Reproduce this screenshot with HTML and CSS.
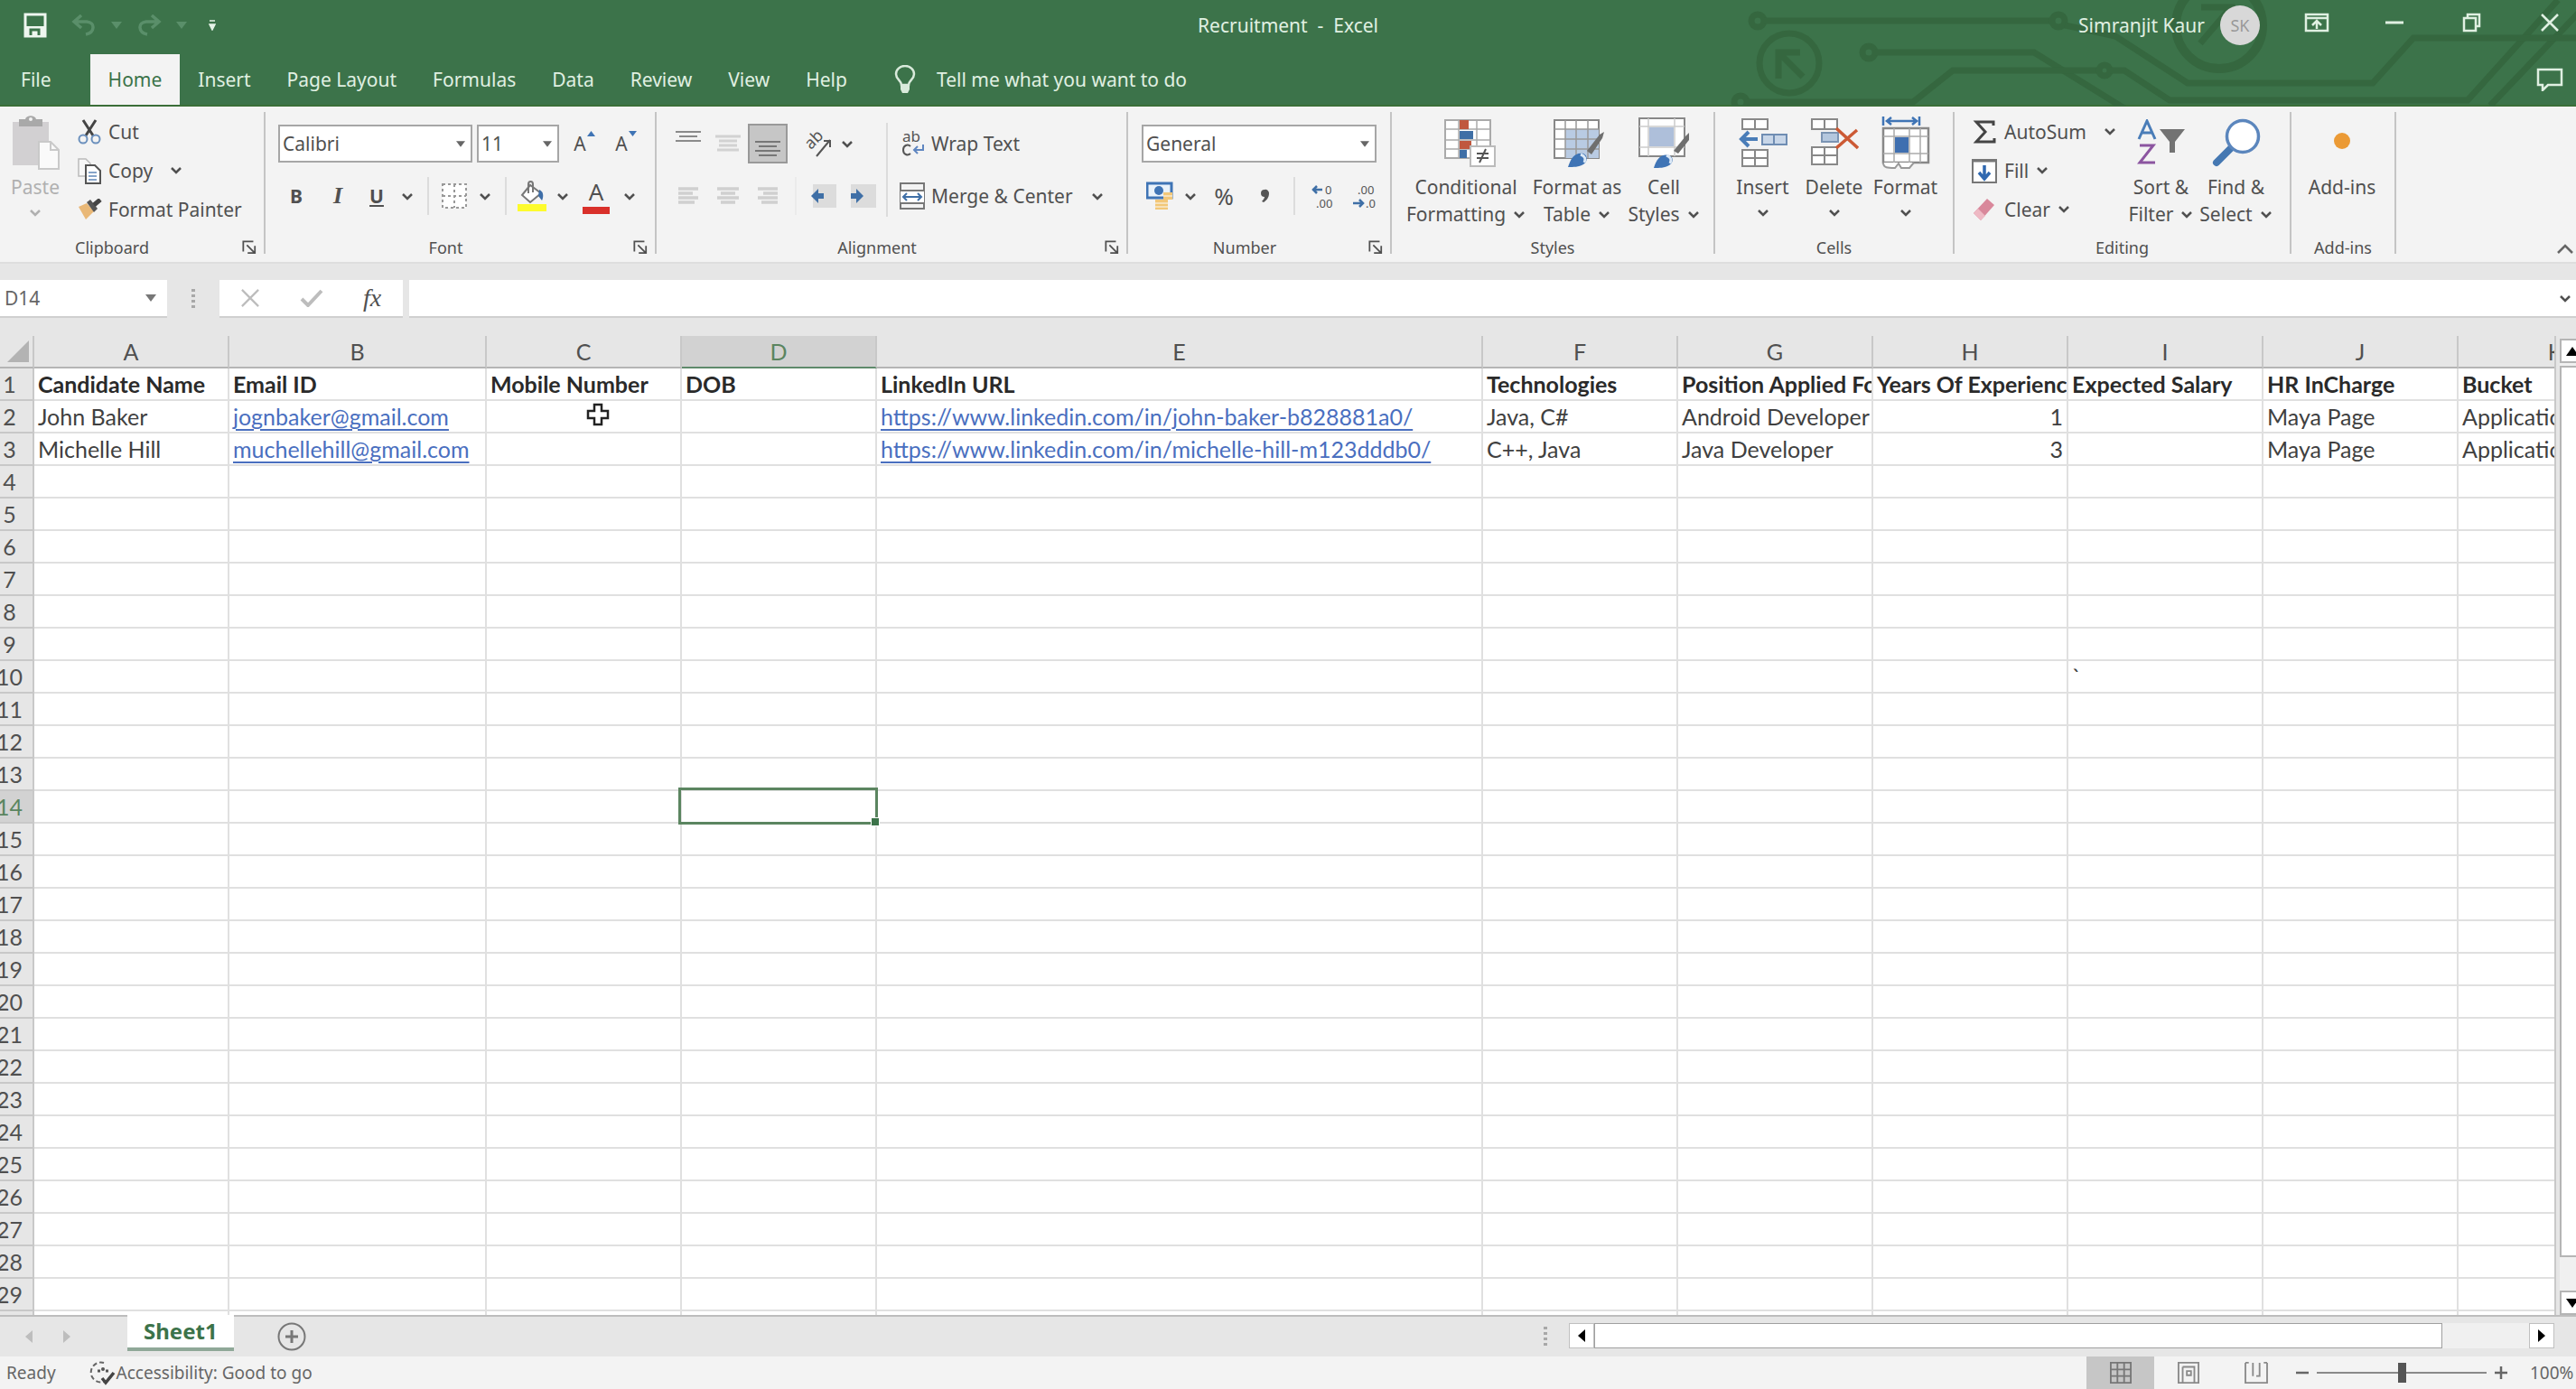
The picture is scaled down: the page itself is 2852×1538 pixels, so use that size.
FILE: index.html
```html
<!DOCTYPE html>
<html lang="en">

<head>
  <meta charset="UTF-8">
  <meta name="viewport" content="width=device-width, initial-scale=1.0">
  <title>Recruitment - Excel</title>
  <link rel="stylesheet" href="styles.css">
</head>

<body>
  <!-- shared icons -->
  <svg class="defs" width="0" height="0" aria-hidden="true">
    <symbol id="chev" viewBox="0 0 14 9"><path d="M2 2l5 5 5-5" fill="none" stroke="currentColor" stroke-width="2.500"/></symbol>
    <symbol id="tri" viewBox="0 0 12 8"><path d="M0 0h12L6 8z" fill="currentColor"/></symbol>
    <symbol id="launch" viewBox="0 0 18 18"><path d="M1.500 14V1.500H14M6 6l9 9M16 7v9H7" fill="none" stroke="currentColor" stroke-width="2"/></symbol>
  </svg>

  <header class="app-header">
    <svg class="circuit" viewBox="0 0 1000 117" width="1000" height="117" aria-hidden="true">
      <g fill="none" stroke="#35673f" stroke-width="7">
        <circle cx="94" cy="23" r="7"/><path d="M101 23h319"/><circle cx="427" cy="23" r="7"/>
        <circle cx="129" cy="70" r="33"/><path d="M117 87V58h24M118 59l26 26"/>
        <circle cx="217" cy="58" r="7"/><path d="M224 58h176l100 62"/>
        <circle cx="75" cy="113" r="7"/><path d="M82 113h184l44-35h162"/><circle cx="478" cy="78" r="6"/>
        <path d="M484 78h16l50 33h330L980 0M905 117l100-105"/>
        <path d="M434 28l56 12 80 52h205l45-50h185"/>
        <circle cx="605" cy="28" r="48" stroke-width="10"/><path d="M585 8h34v30M618 8l-34 40"/>
      </g>
    </svg>

    <div class="title-bar">
      <div class="quick-access">
        <button class="qa save" aria-label="Save"><svg width="26" height="28" viewBox="0 0 26 28"><path d="M2 2h22v24H2z" fill="none" stroke="#eef6ef" stroke-width="3"/><path d="M3 15h20v11H3z" fill="#eef6ef"/><path d="M8 25v-6h9v6" fill="none" stroke="#3c734a" stroke-width="3"/></svg></button>
        <button class="qa" aria-label="Undo" disabled><svg width="28" height="24" viewBox="0 0 28 24"><path d="M11 1L3 8l8 7M3 8h14c10 1 9 12-1 14" fill="none" stroke="currentColor" stroke-width="3.500"/></svg></button>
        <button class="qa small" aria-label="Undo list" disabled><svg width="12" height="8"><use href="#tri"/></svg></button>
        <button class="qa" aria-label="Redo" disabled><svg width="28" height="24" viewBox="0 0 28 24"><path d="M17 1l8 7-8 7M25 8H11C1 9 2 20 12 22" fill="none" stroke="currentColor" stroke-width="3.500"/></svg></button>
        <button class="qa small" aria-label="Redo list" disabled><svg width="12" height="8"><use href="#tri"/></svg></button>
        <button class="qa more" aria-label="Customize Quick Access Toolbar"><svg width="8" height="12" viewBox="0 0 8 12"><path d="M1 1h6M1 5h6L4 11z" fill="#e6f3e8" stroke="#e6f3e8" stroke-width="1.500"/></svg></button>
      </div>
      <div class="doc-title">Recruitment&nbsp; - &nbsp;Excel</div>
      <div class="window-tools">
        <span class="user">Simranjit Kaur</span>
        <span class="avatar">SK</span>
        <button class="win ribbon-opt" aria-label="Ribbon Display Options"><svg width="28" height="22" viewBox="0 0 28 22"><path d="M2 2h24v18H2zM2 6h24M14 18v-8M9 14l5-5 5 5" fill="none" stroke="currentColor" stroke-width="2.500"/></svg></button>
        <button class="win" aria-label="Minimize"><svg width="20" height="22" viewBox="0 0 20 22"><path d="M0 11h20" stroke="currentColor" stroke-width="3"/></svg></button>
        <button class="win" aria-label="Restore Down"><svg width="22" height="22" viewBox="0 0 22 22"><path d="M2 6h13v14H2zM6 6V2h13v13h-4" fill="none" stroke="currentColor" stroke-width="2.500"/></svg></button>
        <button class="win" aria-label="Close"><svg width="20" height="20" viewBox="0 0 20 20"><path d="M1 1l18 18M19 1L1 19" stroke="currentColor" stroke-width="2.500"/></svg></button>
      </div>
    </div>

    <nav class="tabs">
      <button class="tab file">File</button>
      <button class="tab active">Home</button>
      <button class="tab">Insert</button>
      <button class="tab">Page Layout</button>
      <button class="tab">Formulas</button>
      <button class="tab">Data</button>
      <button class="tab">Review</button>
      <button class="tab">View</button>
      <button class="tab">Help</button>
      <button class="tab tell-me">
        <svg width="24" height="32" viewBox="0 0 24 32"><path d="M8 22c0-5-6-6-6-12a10 9 0 0 1 20 0c0 6-6 7-6 12z" fill="none" stroke="#d9eadb" stroke-width="2.500"/><path d="M7 22h10v5l-2 4H9l-2-4z" fill="#d9eadb"/></svg>
        Tell me what you want to do
      </button>
      <button class="tab comments" aria-label="Comments"><svg width="30" height="26" viewBox="0 0 30 26"><path d="M2 2h26v17H13l-6 6v-6H2z" fill="none" stroke="currentColor" stroke-width="2.500"/></svg></button>
    </nav>
  </header>

  <section class="ribbon">
    <div class="group clipboard">
      <div class="group-body">
        <button class="big paste" disabled>
          <span class="big-icon"><svg width="54" height="60" viewBox="0 0 54 60"><path d="M2 7h40v48H2z" fill="#d2d0d2"/><path d="M9 4h7c1-5 11-5 12 0h7v8H9z" fill="#a9a9a9"/><circle cx="22" cy="4" r="2" fill="#f3f3f3"/><path d="M31 29h13l9 9v21H31z" fill="#fafafa" stroke="#c9c9c9" stroke-width="2"/><path d="M44 29v9h9" fill="none" stroke="#c9c9c9" stroke-width="2"/></svg></span>
          Paste
          <svg class="drop" width="14" height="9"><use href="#chev"/></svg>
        </button>
        <div class="list">
          <button class="item"><svg class="item-icon" width="28" height="28" viewBox="0 0 28 28"><path d="M7 1l11 17M21 1L10 18" stroke="#444" stroke-width="3"/><circle cx="7" cy="22" r="4.500" fill="none" stroke="#6b90bd" stroke-width="2"/><circle cx="21" cy="22" r="4.500" fill="none" stroke="#6b90bd" stroke-width="2"/></svg>Cut</button>
          <button class="item"><svg class="item-icon" width="28" height="30" viewBox="0 0 28 30"><path d="M2 2h8l5 5v14H2z" fill="#f8f8f8" stroke="#bbb" stroke-width="1.500"/><path d="M10 9h10l6 6v14H10z" fill="#fff" stroke="#555" stroke-width="2"/><path d="M13 17h9M13 21h9M13 25h9" stroke="#5f86b8" stroke-width="1.500"/></svg>Copy<svg class="drop" width="14" height="9"><use href="#chev"/></svg></button>
          <button class="item"><svg class="item-icon" width="28" height="24" viewBox="0 0 28 24"><path d="M2 9l9-4 8 9-9 9z" fill="#e9b877"/><path d="M11 4l4-3 8 10-4 4z" fill="#555"/><path d="M19 7l7-6" stroke="#444" stroke-width="5"/></svg>Format Painter</button>
        </div>
      </div>
      <div class="group-label"><span>Clipboard</span><button class="launcher" aria-label="Clipboard settings"><svg width="16" height="16"><use href="#launch"/></svg></button></div>
    </div>

    <div class="group font">
      <div class="group-body rows">
        <div class="row">
          <label class="combo font-name"><select aria-label="Font"><option>Calibri</option></select><svg width="10" height="7"><use href="#tri"/></svg></label>
          <label class="combo font-size"><select aria-label="Font size"><option>11</option></select><svg width="10" height="7"><use href="#tri"/></svg></label>
          <button class="tool wide grow" aria-label="Increase Font Size">A<svg width="9" height="6" viewBox="0 0 9 6"><path d="M0 6l4.500-6L9 6z" fill="#3f74b5"/></svg></button>
          <button class="tool wide grow" aria-label="Decrease Font Size">A<svg width="9" height="6" viewBox="0 0 9 6"><path d="M0 0h9L4.500 6z" fill="#3f74b5"/></svg></button>
        </div>
        <div class="row">
          <button class="tool wide bold">B</button>
          <button class="tool wide italic">I</button>
          <button class="tool bold underline">U</button>
          <button class="tool arrow" aria-label="Underline options"><svg width="14" height="9"><use href="#chev"/></svg></button>
          <span class="sep"></span>
          <button class="tool" aria-label="Borders"><svg width="28" height="28" viewBox="0 0 28 28"><path d="M1 1h26v26H1z" fill="#fff"/><path d="M1 1h26v26H1zM14 1v26M1 14h26" fill="none" stroke="#999" stroke-width="2" stroke-dasharray="3 3"/></svg></button>
          <button class="tool arrow" aria-label="Border options"><svg width="14" height="9"><use href="#chev"/></svg></button>
          <span class="sep"></span>
          <button class="tool fill" aria-label="Fill Color"><svg width="32" height="34" viewBox="0 0 32 34"><path d="M14 5L5 16l9 8 12-10z" fill="#fff" stroke="#777" stroke-width="2"/><path d="M12 14V4c0-4 5-4 5 0v9" fill="none" stroke="#777" stroke-width="2"/><path d="M24 10c5 2 5 8 3 12l-4-5z" fill="#3e6ea8"/><path d="M0 26h32v8H0z" fill="#fdfb2d"/></svg></button>
          <button class="tool arrow" aria-label="Fill color options"><svg width="14" height="9"><use href="#chev"/></svg></button>
          <button class="tool wide font-color" aria-label="Font Color">A</button>
          <button class="tool arrow" aria-label="Font color options"><svg width="14" height="9"><use href="#chev"/></svg></button>
        </div>
      </div>
      <div class="group-label"><span>Font</span><button class="launcher" aria-label="Font settings"><svg width="16" height="16"><use href="#launch"/></svg></button></div>
    </div>

    <div class="group alignment">
      <div class="group-body">
        <div class="rows align-tools">
          <div class="row">
            <button class="tool mid" aria-label="Top Align"><svg width="28" height="28" viewBox="0 0 28 28"><path d="M0 1h28M4 6h20M0 11h28" stroke="#8a8a8a" stroke-width="2"/></svg></button>
            <button class="tool mid" aria-label="Middle Align"><svg width="28" height="20" viewBox="0 0 28 20"><path d="M0 2h28M4 7h20M4 12h20M2 17h24" stroke="#d2d2d2" stroke-width="3"/></svg></button>
            <button class="tool mid pressed" aria-label="Bottom Align"><svg width="28" height="28" viewBox="0 0 28 28"><path d="M0 12h28M4 17h20M0 22h28M4 27h20" stroke="#777" stroke-width="2"/></svg></button>
            <button class="tool orient" aria-label="Orientation"><svg width="34" height="34" viewBox="0 0 34 34"><text x="3" y="17" transform="rotate(-45 14 15)" class="svg-text" font-size="18">ab</text><path d="M14 31L29 13M22 14h7v7" fill="none" stroke="#555" stroke-width="2"/></svg></button>
            <button class="tool arrow" aria-label="Orientation options"><svg width="14" height="9"><use href="#chev"/></svg></button>
          </div>
          <div class="row">
            <button class="tool mid" aria-label="Align Left"><svg width="22" height="20" viewBox="0 0 22 20"><path d="M0 2h22M0 7h16M0 12h22M0 17h18" stroke="#d0d0d0" stroke-width="3.500"/></svg></button>
            <button class="tool mid" aria-label="Center"><svg width="24" height="20" viewBox="0 0 24 20"><path d="M0 2h24M4 7h16M0 12h24M4 17h16" stroke="#d0d0d0" stroke-width="3.500"/></svg></button>
            <button class="tool mid" aria-label="Align Right"><svg width="22" height="20" viewBox="0 0 22 20"><path d="M0 2h22M6 7h16M0 12h22M4 17h18" stroke="#d0d0d0" stroke-width="3.500"/></svg></button>
            <span class="sep faint"></span>
            <button class="tool mid" aria-label="Decrease Indent"><svg width="28" height="26" viewBox="0 0 28 26"><path d="M2 0h26v26H2z" fill="#dcdcdc"/><path d="M0 13l8-8v5h6v6H8v5z" fill="#3f6fa6"/></svg></button>
            <button class="tool mid" aria-label="Increase Indent"><svg width="28" height="26" viewBox="0 0 28 26"><path d="M0 0h28v26H0z" fill="#dcdcdc"/><path d="M14 13L6 5v5H0v6h6v5z" fill="#3f6fa6"/></svg></button>
          </div>
        </div>
        <div class="rows">
          <button class="row item"><svg class="item-icon" width="28" height="34" viewBox="0 0 28 34"><text x="3" y="15" class="svg-text" font-size="17">ab</text><path d="M12 20c-3-3-8-1-8 4s5 7 8 4" fill="none" stroke="#555" stroke-width="2"/><path d="M26 18v6H16M20 20l-4 4 4 4" fill="none" stroke="#5f86c0" stroke-width="2"/></svg>Wrap Text</button>
          <div class="row">
            <button class="item"><svg class="item-icon" width="28" height="30" viewBox="0 0 28 30"><path d="M0 1h28M0 9h28M0 23h28M0 29h28M1 1v28M27 1v28" stroke="#777" stroke-width="2"/><path d="M1 10h26v12H1z" fill="#fff"/><path d="M4 16h20M8 12l-4 4 4 4M20 12l4 4-4 4" fill="none" stroke="#3f6fa6" stroke-width="2"/></svg>Merge &amp; Center</button>
            <button class="tool arrow merge-arrow" aria-label="Merge options"><svg width="14" height="9"><use href="#chev"/></svg></button>
          </div>
        </div>
      </div>
      <div class="group-label"><span>Alignment</span><button class="launcher" aria-label="Alignment settings"><svg width="16" height="16"><use href="#launch"/></svg></button></div>
    </div>

    <div class="group number">
      <div class="group-body rows">
        <div class="row">
          <label class="combo number-format"><select aria-label="Number format"><option>General</option></select><svg width="10" height="7"><use href="#tri"/></svg></label>
        </div>
        <div class="row">
          <button class="tool" aria-label="Accounting Number Format"><svg width="30" height="32" viewBox="0 0 30 32"><path d="M1 2h27v16H1z" fill="#eaf2fa" stroke="#3f74b5" stroke-width="3"/><path d="M9 10a5 5 0 0 1 10 0 5 5 0 0 1-10 0" fill="#3f74b5"/><path d="M19 12h10v8H19zM10 20h14v11H10z" fill="#f2c778"/><path d="M10 24h14M10 28h14M19 16h10" stroke="#f8ead0" stroke-width="1.500"/></svg></button>
          <button class="tool arrow" aria-label="Accounting options"><svg width="14" height="9"><use href="#chev"/></svg></button>
          <button class="tool wide percent">%</button>
          <button class="tool wide comma" aria-label="Comma Style"><svg width="10" height="16" viewBox="0 0 10 16"><path d="M4 1a4 4 0 0 1 5 4c0 5-3 8-6 10l-2-1c2-2 3-4 3-5a4 4 0 0 1 0-8z" fill="#555"/></svg></button>
          <span class="sep"></span>
          <button class="tool wide" aria-label="Increase Decimal"><svg width="26" height="34" viewBox="0 0 26 34"><path d="M12 10H1M6 6l-4 4 4 4" fill="none" stroke="#3f6fa6" stroke-width="2.500"/><text x="15" y="15" class="svg-text" font-size="13">0</text><text x="5" y="30" class="svg-text" font-size="13">.00</text></svg></button>
          <button class="tool wide" aria-label="Decrease Decimal"><svg width="28" height="34" viewBox="0 0 28 34"><text x="6" y="15" class="svg-text" font-size="13">.00</text><path d="M1 25h11M8 21l4 4-4 4" fill="none" stroke="#3f6fa6" stroke-width="2.500"/><text x="15" y="30" class="svg-text" font-size="13">.0</text></svg></button>
        </div>
      </div>
      <div class="group-label"><span>Number</span><button class="launcher" aria-label="Number settings"><svg width="16" height="16"><use href="#launch"/></svg></button></div>
    </div>

    <div class="group styles">
      <div class="group-body">
        <button class="big w-cond"><span class="big-icon"><svg width="66" height="54" viewBox="-8 0 66 54"><path d="M2 2h50v42H2z" fill="#fff" stroke="#aaa" stroke-width="2"/><path d="M2 12h50M2 24h50M2 34h50M17 2v42M37 2v42" stroke="#aaa" stroke-width="1.500"/><path d="M18 2h10v10H18zM18 25h13v9H18z" fill="#c0583e"/><path d="M18 14h15v9H18zM18 35h8v9h-8z" fill="#3f6fa6"/><path d="M30 31h27v22H30z" fill="#fff" stroke="#bbb" stroke-width="2"/><path d="M37 39h13M37 44h13M47 34l-7 15" stroke="#555" stroke-width="2"/></svg></span>Conditional<span>Formatting<svg class="drop" width="14" height="9"><use href="#chev"/></svg></span></button>
        <button class="big w-table"><span class="big-icon"><svg width="60" height="54" viewBox="-4 0 60 54"><path d="M1 2h49v42H1z" fill="#fff" stroke="#888" stroke-width="2"/><path d="M13 12h37v32H13z" fill="#b9cbe3"/><path d="M1 12h49M1 23h49M1 34h49M13 2v42M25 2v42M38 2v42" stroke="#999" stroke-width="1.500"/><path d="M37 36l14-18 5-3-2 7-12 18z" fill="#6f6f6f"/><path d="M16 54c3-10 8-17 17-15 5 2 5 9 0 12-5 3-11 3-17 3z" fill="#3f74b5"/><path d="M30 40c5 2 6 5 4 9" stroke="#dbe8f6" stroke-width="3" fill="none"/></svg></span>Format as<span>Table<svg class="drop" width="14" height="9"><use href="#chev"/></svg></span></button>
        <button class="big w-cell"><span class="big-icon"><svg width="56" height="58" viewBox="0 0 56 58"><path d="M1 2h50v42H1z" fill="#fff" stroke="#888" stroke-width="2"/><path d="M1 11h50M1 34h50M11 2v42M40 2v42" stroke="#ccc" stroke-width="1.500"/><path d="M12 12h27v21H12z" fill="#aebfda"/><path d="M39 38l13-16 4-4v8L44 41z" fill="#6f6f6f"/><path d="M17 57c3-10 8-16 17-14 5 2 5 8 0 11-5 3-11 3-17 3z" fill="#3f74b5"/><path d="M31 43c5 2 6 5 4 9" stroke="#dbe8f6" stroke-width="3" fill="none"/></svg></span>Cell<span>Styles<svg class="drop" width="14" height="9"><use href="#chev"/></svg></span></button>
      </div>
      <div class="group-label"><span>Styles</span></div>
    </div>

    <div class="group cells">
      <div class="group-body">
        <button class="big w-cells"><span class="big-icon"><svg width="54" height="56" viewBox="0 0 54 56"><path d="M4 2h28v11H4zM18 2v11M4 36h28v18H4zM18 36v18M4 45h28" fill="#fff" stroke="#888" stroke-width="2"/><path d="M26 19h27v11H26zM39 19v11" fill="#c8d6e8" stroke="#6f8db3" stroke-width="2"/><path d="M21 24H3M11 16l-8 8 8 8" fill="none" stroke="#4a7db8" stroke-width="4"/></svg></span>Insert<svg class="drop" width="14" height="9"><use href="#chev"/></svg></button>
        <button class="big w-cells"><span class="big-icon"><svg width="54" height="56" viewBox="0 0 54 56"><path d="M2 2h28v11H2zM16 2v11M2 33h28v19H2zM16 33v19M2 42h28" fill="#fff" stroke="#888" stroke-width="2"/><path d="M13 17h18v10H13z" fill="#b4c7de" stroke="#7b94b3" stroke-width="2"/><path d="M29 12l24 22M52 14L29 34" stroke="#cc5a35" stroke-width="3.500"/></svg></span>Delete<svg class="drop" width="14" height="9"><use href="#chev"/></svg></button>
        <button class="big w-cells"><span class="big-icon"><svg width="54" height="58" viewBox="0 0 54 58"><path d="M2 0v10M42 0v10M6 5h33M11 1L6 5l5 4M34 1l5 4-5 4" fill="none" stroke="#3f74b5" stroke-width="2.500"/><path d="M2 13h50v38H2z" fill="#fff" stroke="#888" stroke-width="2.500"/><path d="M2 22h50M2 41h50M14 13v38M31 13v38M43 13v38" stroke="#aaa" stroke-width="1.500"/><path d="M15 23h15v17H15z" fill="#3f6fb0"/><path d="M2 51c0 6 5 6 13 6l4-5 3 5h9l5-6" fill="#fff" stroke="#999" stroke-width="2"/></svg></span>Format<svg class="drop" width="14" height="9"><use href="#chev"/></svg></button>
      </div>
      <div class="group-label"><span>Cells</span></div>
    </div>

    <div class="group editing">
      <div class="group-body">
        <div class="list">
          <button class="item"><svg class="item-icon" width="30" height="26" viewBox="0 0 30 26"><path d="M25 6V2H6l10 11L6 24h20v-4" fill="none" stroke="#444" stroke-width="3"/></svg>AutoSum<svg class="drop" width="14" height="9"><use href="#chev"/></svg></button>
          <button class="item tight"><svg class="item-icon" width="30" height="28" viewBox="0 0 30 28"><path d="M2 2h26v25H2z" fill="#fff" stroke="#777" stroke-width="2"/><path d="M2 3h26" stroke="#777" stroke-width="3"/><path d="M15 8v15M9 16l6 7 6-7" fill="none" stroke="#2f68b0" stroke-width="3.500"/></svg>Fill<svg class="drop" width="14" height="9"><use href="#chev"/></svg></button>
          <button class="item tight"><svg class="item-icon" width="30" height="26" viewBox="0 0 30 26"><path d="M18 1l8 7-15 17-8-8z" fill="#d9889b"/><path d="M8 12l8 8-5 5-8-8z" fill="#eeb9c4"/></svg>Clear<svg class="drop" width="14" height="9"><use href="#chev"/></svg></button>
        </div>
        <button class="big w-edit"><span class="big-icon"><svg width="54" height="52" viewBox="0 0 54 52"><path d="M2 22L11 2l9 20M5 15h12" fill="none" stroke="#4a7db8" stroke-width="3"/><path d="M3 29h15L3 48h17" fill="none" stroke="#8c55a0" stroke-width="3"/><path d="M25 11h28L42 25v12h-6V25z" fill="#737373"/></svg></span>Sort &amp;<span>Filter<svg class="drop" width="14" height="9"><use href="#chev"/></svg></span></button>
        <button class="big w-edit"><span class="big-icon"><svg width="54" height="54" viewBox="0 0 54 54"><path d="M21 33L5 49" stroke="#4578b2" stroke-width="8" stroke-linecap="round"/><circle cx="34" cy="20" r="17.500" fill="#fff" stroke="#5b86bd" stroke-width="3.500"/></svg></span>Find &amp;<span>Select<svg class="drop" width="14" height="9"><use href="#chev"/></svg></span></button>
      </div>
      <div class="group-label"><span>Editing</span></div>
    </div>

    <div class="group addins">
      <div class="group-body">
        <button class="big w-addins"><span class="big-icon"><svg width="22" height="22" viewBox="0 0 22 22"><circle cx="11" cy="9" r="9" fill="#eb9a35"/></svg></span>Add-ins</button>
      </div>
      <div class="group-label"><span>Add-ins</span></div>
    </div>

    <button class="collapse" aria-label="Collapse the Ribbon"><svg width="20" height="12" viewBox="0 0 20 12"><path d="M2 11l8-8 8 8" fill="none" stroke="#666" stroke-width="2.500"/></svg></button>
  </section>

  <section class="formula-bar">
    <label class="name-box"><input type="text" value="D14" aria-label="Name Box"><svg width="12" height="8"><use href="#tri"/></svg></label>
    <span class="dots"></span>
    <div class="formula-actions">
      <button aria-label="Cancel"><svg width="22" height="20" viewBox="0 0 24 22"><path d="M2 1l20 20M22 1L2 21" stroke="#bdbdbd" stroke-width="2.500"/></svg></button>
      <button aria-label="Enter"><svg width="26" height="20" viewBox="0 0 26 20"><path d="M2 11l7 7L24 2" fill="none" stroke="#bdbdbd" stroke-width="4"/></svg></button>
      <button class="fx" aria-label="Insert Function">fx</button>
    </div>
    <input class="formula" type="text" aria-label="Formula">
    <button class="expand" aria-label="Expand Formula Bar"><svg width="14" height="9"><use href="#chev"/></svg></button>
  </section>

  <main class="workspace">
    <div class="sheet">
      <table class="grid">
        <colgroup>
          <col class="c-head"><col class="c-std"><col class="c-email"><col class="c-std"><col class="c-std"><col class="c-link">
          <col class="c-std"><col class="c-std"><col class="c-std"><col class="c-std"><col class="c-std"><col class="c-std">
        </colgroup>
        <thead>
          <tr id="columns"><th class="corner"><svg width="24" height="24" viewBox="0 0 24 24"><path d="M24 0v24H0z" fill="#b3b3b3"/></svg></th></tr>
        </thead>
        <tbody id="rows"></tbody>
      </table>
      <svg class="cursor" width="26" height="26" viewBox="0 0 26 26"><path d="M9 2h8v7h7v8h-7v7H9v-7H2V9h7z" fill="#fff" stroke="#222" stroke-width="2.500"/></svg>
    </div>
    <div class="v-scroll">
      <button aria-label="Scroll up"><svg width="14" height="10" viewBox="0 0 14 10"><path d="M0 10L7 0l7 10z"/></svg></button>
      <div class="v-track"><div class="v-thumb"></div></div>
      <button aria-label="Scroll down"><svg width="14" height="10" viewBox="0 0 14 10"><path d="M0 0h14L7 10z"/></svg></button>
    </div>
  </main>

  <div class="sheet-bar">
    <button class="nav" aria-label="Previous sheet"><svg width="8" height="14" viewBox="0 0 8 14"><path d="M8 0v14L0 7z" fill="#bdbdbd"/></svg></button>
    <button class="nav" aria-label="Next sheet"><svg width="8" height="14" viewBox="0 0 8 14"><path d="M0 0v14l8-7z" fill="#bdbdbd"/></svg></button>
    <button class="sheet-tab">Sheet1</button>
    <button class="add-sheet" aria-label="New sheet"><svg width="32" height="32" viewBox="0 0 32 32"><circle cx="16" cy="16" r="14.500" fill="none" stroke="#777" stroke-width="2"/><path d="M16 9v14M9 16h14" stroke="#777" stroke-width="3"/></svg></button>
    <span class="dots"></span>
    <div class="h-scroll">
      <button aria-label="Scroll left"><svg width="8" height="14" viewBox="0 0 8 14"><path d="M8 0v14L0 7z"/></svg></button>
      <div class="h-track"><div class="h-thumb"></div></div>
      <button aria-label="Scroll right"><svg width="8" height="14" viewBox="0 0 8 14"><path d="M0 0v14l8-7z"/></svg></button>
    </div>
  </div>

  <footer class="status">
    <span class="ready">Ready</span>
    <button class="access"><svg width="30" height="28" viewBox="0 0 30 28"><path d="M17 3a11 11 0 1 0 0 21" fill="none" stroke="#666" stroke-width="2" stroke-dasharray="5 3"/><path d="M10 12h3M19 12h3" stroke="#555" stroke-width="3"/><circle cx="16" cy="10" r="2" fill="#555"/><path d="M15 20l4 5 9-11" fill="none" stroke="#444" stroke-width="3.500"/></svg>Accessibility: Good to go</button>
    <div class="views">
      <button class="view on" aria-label="Normal"><svg width="24" height="24" viewBox="0 0 26 26"><path d="M1 1h24v24H1zM9 1v24M17 1v24M1 9h24M1 17h24" fill="none" stroke="#777" stroke-width="2"/></svg></button>
      <button class="view" aria-label="Page Layout"><svg width="24" height="24" viewBox="0 0 26 26"><path d="M1 1h24v24H1zM6 6h14v19M6 6v19M11 11h5v5h-5z" fill="none" stroke="#8a8a8a" stroke-width="2"/></svg></button>
      <button class="view" aria-label="Page Break Preview"><svg width="26" height="24" viewBox="0 0 28 26"><path d="M1 1v24h26V1M1 1h4M23 1h4M10 1v16M18 1v16h-4" fill="none" stroke="#8a8a8a" stroke-width="2"/></svg></button>
    </div>
    <button class="zoom-btn" aria-label="Zoom out"><svg width="14" height="14" viewBox="0 0 14 14"><path d="M0 7h14" stroke="#666" stroke-width="2.500"/></svg></button>
    <input class="zoom" type="range" min="0" max="100" value="50" aria-label="Zoom">
    <button class="zoom-btn" aria-label="Zoom in"><svg width="14" height="14" viewBox="0 0 14 14"><path d="M0 7h14M7 0v14" stroke="#666" stroke-width="2.500"/></svg></button>
    <span class="zoom-value">100%</span>
  </footer>

  <script>
    const letters = ['A', 'B', 'C', 'D', 'E', 'F', 'G', 'H', 'I', 'J', 'K'];
    const selected = { col: 'D', row: 14 };
    const rowCount = 30;

    const cells = {
      1: ['Candidate Name', 'Email ID', 'Mobile Number', 'DOB', 'LinkedIn URL', 'Technologies', 'Position Applied For', 'Years Of Experience', 'Expected Salary', 'HR InCharge', 'Bucket'],
      2: ['John Baker', 'jognbaker@gmail.com', '', '', 'https://www.linkedin.com/in/john-baker-b828881a0/', 'Java, C#', 'Android Developer', 1, '', 'Maya Page', 'Application'],
      3: ['Michelle Hill', 'muchellehill@gmail.com', '', '', 'https://www.linkedin.com/in/michelle-hill-m123dddb0/', 'C++, Java', 'Java Developer', 3, '', 'Maya Page', 'Application'],
      10: ['', '', '', '', '', '', '', '', '`', '', '']
    };

    // Column letters
    const columns = document.getElementById('columns');
    letters.forEach((letter) => {
      const th = document.createElement('th');
      th.scope = 'col';
      th.textContent = letter;
      if (letter === selected.col) th.classList.add('selected');
      columns.appendChild(th);
    });

    // Sheet rows
    const rows = document.getElementById('rows');
    for (let r = 1; r <= rowCount; r++) {
      const tr = document.createElement('tr');
      const th = document.createElement('th');
      th.scope = 'row';
      th.textContent = r;
      if (r === selected.row) th.classList.add('selected');
      tr.appendChild(th);

      letters.forEach((letter, i) => {
        const td = document.createElement('td');
        const value = cells[r] ? cells[r][i] : '';
        if (typeof value === 'number') td.classList.add('num');
        if (r === 1) td.classList.add('heading');

        if (/@|^https/.test(value)) {
          const a = document.createElement('a');
          a.href = value.includes('@') ? `mailto:${value}` : value;
          a.textContent = value;
          td.appendChild(a);
        } else {
          td.textContent = value;
        }

        if (letter === selected.col && r === selected.row) td.classList.add('active-cell');
        tr.appendChild(td);
      });
      rows.appendChild(tr);
    }
  </script>
</body>

</html>
```
FILE: styles.css
```css
* {
  box-sizing: border-box;
}

body {
  margin: 0;
  height: 100vh;
  display: flex;
  flex-direction: column;
  overflow: hidden;
  background: #e6e6e6;
  color: #505050;
  font-family: "Noto Sans", "Open Sans", sans-serif;
  font-size: 21px;
  line-height: 30px;
}

button {
  display: flex;
  align-items: center;
  justify-content: center;
  margin: 0;
  padding: 0;
  border: 0;
  background: none;
  color: inherit;
  font: inherit;
  white-space: nowrap;
}

input,
select {
  font: inherit;
  color: inherit;
  border: 0;
  margin: 0;
  border-radius: 0;
}

svg {
  flex: none;
}

.defs {
  position: absolute;
}

.svg-text {
  font-family: "Noto Sans", sans-serif;
  fill: #555;
}

/* Header */
.app-header {
  position: relative;
  flex: none;
  background: #3c734a;
  color: #e0f0e2;
  border-bottom: 2px solid #3a6e38;
}

.circuit {
  position: absolute;
  top: 0;
  right: 0;
}

.title-bar {
  position: relative;
  display: grid;
  grid-template-columns: 1fr auto 1fr;
  align-items: center;
  height: 56px;
}

.quick-access {
  display: flex;
  align-items: center;
  padding-left: 16px;
}

.qa {
  width: 46px;
  color: #5a8f6a;
}

.qa.save {
  margin-right: 8px;
}

.qa.small {
  width: 26px;
}

.qa.more {
  width: 42px;
}

.window-tools {
  display: flex;
  align-items: center;
  justify-content: flex-end;
}

.avatar {
  width: 44px;
  height: 44px;
  margin: 0 20px 0 17px;
  border-radius: 50%;
  background: #d8d8d8;
  color: #999;
  font-size: 18px;
  line-height: 44px;
  text-align: center;
}

.win {
  width: 86px;
  height: 48px;
  margin-bottom: 6px;
}

.win:last-child {
  width: 58px;
  margin-left: 14px;
}

.tabs {
  position: relative;
  display: flex;
  height: 60px;
  padding-top: 4px;
}

.tab {
  padding: 0 20px;
}

.tab.file {
  padding: 0 23px;
  margin-right: 20px;
}

.tab.active {
  background: #f3f3f3;
  color: #3c734a;
}

.tab.tell-me {
  gap: 23px;
  padding-left: 32px;
}

.tab.comments {
  margin-left: auto;
  padding: 0 14px;
}

/* Ribbon */
.ribbon {
  flex: none;
  display: flex;
  padding: 6px 0 9px;
  background: #f3f3f3;
  border-bottom: 2px solid #dedede;
}

.group {
  display: flex;
  flex-direction: column;
  border-right: 2px solid #c4c4c4;
}

.group-body {
  display: flex;
  height: 142px;
}

.group-label {
  display: flex;
  align-items: center;
  height: 15px;
  font-size: 18px;
}

.group-label span {
  flex: 1;
  text-align: center;
}

.launcher {
  width: 32px;
}

.clipboard {
  min-width: 294px;
}

.clipboard .group-label span {
  padding-right: 12px;
}

.font {
  min-width: 433px;
}

.alignment {
  min-width: 522px;
}

.number {
  min-width: 292px;
}

.styles {
  min-width: 358px;
}

.cells {
  min-width: 265px;
}

.editing {
  min-width: 373px;
}

.addins {
  min-width: 116px;
}

.big {
  flex-direction: column;
  justify-content: flex-start;
}

.big-icon {
  display: flex;
  align-items: center;
  height: 68px;
}

.big > .drop {
  margin-top: 9px;
}

.big span .drop {
  margin-left: 8px;
  vertical-align: 3px;
}

.paste {
  width: 78px;
  color: #b0b0b0;
}

.list {
  display: flex;
  flex-direction: column;
}

.item {
  justify-content: flex-start;
  height: 43px;
}

.item-icon {
  margin-right: 7px;
}

.clipboard .list {
  padding-left: 7px;
}

.item .drop {
  margin-left: 19px;
}

.item.tight .drop {
  margin-left: 8px;
}

.rows {
  display: flex;
  flex-direction: column;
  gap: 14px;
  padding-top: 13px;
}

.row {
  display: flex;
  align-items: center;
  height: 44px;
}

.combo {
  display: grid;
  align-items: center;
  height: 42px;
  border: 2px solid #a6a6a6;
  background: #fff;
}

.combo select,
.combo svg {
  grid-area: 1 / 1;
}

.combo select {
  width: 100%;
  height: 38px;
  padding: 0 3px;
  appearance: none;
  background: none;
}

.combo svg {
  justify-self: end;
  margin-right: 6px;
  color: #666;
  pointer-events: none;
}

.font-name {
  width: 215px;
  margin-right: 5px;
}

.font-size {
  width: 91px;
}

.number-format {
  width: 260px;
}

.tool {
  width: 40px;
  height: 44px;
}

.tool.mid {
  width: 44px;
}

.tool.wide {
  width: 46px;
}

.tool.arrow {
  width: 28px;
}

.font .row:first-child {
  padding-left: 14px;
}

.font .row:last-child {
  padding-left: 11px;
}

.font-size + .grow {
  margin-left: 5px;
}

.grow {
  gap: 1px;
}

.grow svg {
  align-self: flex-start;
  margin-top: 8px;
}

.bold {
  font-weight: bold;
}

.italic {
  font-family: "Liberation Serif", serif;
  font-size: 26px;
  font-style: italic;
  font-weight: bold;
}

.underline {
  text-decoration: underline;
}

.sep {
  width: 2px;
  height: 42px;
  margin: 0 8px;
  background: #dcdcdc;
}

.sep.faint {
  background: #ebebeb;
}

.font-color {
  background: linear-gradient(#d9302a, #d9302a) center 34px / 30px 8px no-repeat;
  font-size: 26px;
  line-height: 28px;
  padding-bottom: 10px;
}

.pressed {
  background: #c6c6c6;
  border: 2px solid #999;
}

.alignment .group-body {
  padding-left: 13px;
}

.align-tools {
  width: 256px;
  background: linear-gradient(#dcdcdc, #dcdcdc) 241px 12px / 2px 104px no-repeat;
}

.orient {
  width: 34px;
  margin-left: 18px;
}

.merge-arrow {
  margin-left: 13px;
}

.number .group-body {
  padding-left: 15px;
}

.percent {
  font-size: 26px;
}

.styles .group-body {
  padding-left: 10px;
}

.w-cond {
  width: 144px;
}

.w-table {
  width: 102px;
}

.w-cell {
  width: 90px;
}

.cells .group-body {
  padding-left: 13px;
}

.w-cells {
  width: 79px;
}

.editing .list {
  width: 187px;
  padding-left: 18px;
}

.w-edit {
  width: 83px;
}

.w-addins {
  width: 112px;
}

.collapse {
  align-self: flex-end;
  margin-left: auto;
  width: 24px;
  height: 12px;
}

/* Formula bar */
.formula-bar {
  flex: none;
  display: flex;
  align-items: center;
  height: 42px;
  margin: 18px 0 20px;
}

.name-box {
  display: flex;
  align-items: center;
  align-self: stretch;
  width: 185px;
  padding-right: 12px;
  background: #fff;
  color: #777;
  border-bottom: 2px solid #d0d0d0;
}

.name-box input {
  flex: 1;
  width: 100%;
  padding: 0 0 0 5px;
  background: none;
  color: #666;
}

.dots {
  width: 4px;
  height: 22px;
  margin: 0 27px;
  background: repeating-linear-gradient(#a8a8a8 0 3px, transparent 3px 6px);
}

.formula-actions {
  display: flex;
  align-self: stretch;
  width: 203px;
  margin-right: 7px;
  background: #fff;
  border-bottom: 2px solid #d0d0d0;
}

.formula-actions button {
  flex: 1;
}

.fx {
  font-family: "Liberation Serif", serif;
  font-size: 28px;
  font-style: italic;
}

.formula {
  flex: 1;
  align-self: stretch;
  padding: 0 8px;
  background: #fff;
  border-bottom: 2px solid #d0d0d0;
}

.expand {
  align-self: stretch;
  width: 24px;
  background: #fff;
  border-bottom: 2px solid #d0d0d0;
}

/* Sheet */
.workspace {
  flex: 1;
  min-height: 0;
  display: flex;
}

.sheet {
  position: relative;
  flex: 1;
  min-width: 0;
  overflow: hidden;
  background: #fff;
}

.grid {
  width: 2900px;
  margin-left: -15px;
  table-layout: fixed;
  border-collapse: separate;
  border-spacing: 0;
  font-family: Lato, "Open Sans", sans-serif;
  font-size: 25px;
  line-height: 34px;
  color: #404040;
}

.c-head {
  width: 53px;
}

.c-std {
  width: 216px;
}

.c-email {
  width: 285px;
}

.c-link {
  width: 671px;
}

.grid th,
.grid td {
  height: 36px;
  padding: 0 4px;
  border-right: 2px solid #e0e0e0;
  border-bottom: 2px solid #e0e0e0;
  white-space: nowrap;
  overflow: hidden;
}

.grid th {
  padding: 0;
  background: #e6e6e6;
  border-color: #c8c8c8;
  font-weight: normal;
  color: #505050;
}

.grid thead th {
  border-bottom-color: #b5b5b5;
}

.grid .corner {
  padding-right: 4px;
  text-align: right;
  line-height: 0;
}

.grid th.selected {
  background: #d2d2d2;
  color: #5b8560;
}

.grid thead .selected {
  border-bottom-color: #5f8a6b;
}

.grid td.heading {
  font-weight: bold;
  color: #2a2a2a;
}

.grid td.num {
  text-align: right;
}

.grid a {
  color: #4a6fbf;
  text-decoration-thickness: 2px;
  text-underline-offset: 4px;
}

.grid td.active-cell {
  position: relative;
  overflow: visible;
}

.active-cell::before {
  content: "";
  position: absolute;
  inset: -4px -3px -3px -4px;
  border: 3px solid #5b8560;
}

.active-cell::after {
  content: "";
  position: absolute;
  right: -5px;
  bottom: -5px;
  width: 8px;
  height: 8px;
  background: #3c734a;
  border: 1px solid #fff;
}

.cursor {
  position: absolute;
  left: 649px;
  top: 74px;
}

.v-scroll {
  display: flex;
  flex-direction: column;
  flex: none;
  width: 24px;
  padding: 3px 0 0 4px;
  border-left: 2px solid #c8c8c8;
  overflow: hidden;
}

.v-scroll button {
  width: 28px;
  height: 27px;
  background: #fff;
  border: 2px solid #b5b5b5;
}

.v-track {
  flex: 1;
  padding: 3px 0 37px;
  background: #f0f0f0;
}

.v-thumb {
  width: 28px;
  height: 100%;
  background: #fff;
  border: 2px solid #b5b5b5;
}

/* Sheet tabs */
.sheet-bar {
  flex: none;
  display: flex;
  align-items: center;
  height: 46px;
  padding: 0 24px 0 11px;
  border-top: 2px solid #bdbdbd;
}

.nav {
  width: 42px;
}

.sheet-tab {
  align-self: flex-start;
  height: 40px;
  margin: -2px 48px 0 46px;
  padding: 0 18px;
  background: #fff;
  border-bottom: 4px solid #8fa898;
  color: #3c734a;
  font-size: 24px;
  font-weight: bold;
}

.sheet-bar .dots {
  margin: 0 24px 0 auto;
}

.h-scroll {
  display: flex;
  width: 1091px;
  height: 28px;
  margin-bottom: 2px;
}

.h-scroll button {
  width: 28px;
  background: #fff;
  border: 1px solid #c0c0c0;
}

.h-track {
  flex: 1;
  padding-right: 96px;
  background: #f0f0f0;
}

.h-thumb {
  height: 100%;
  background: #fff;
  border: 1px solid #a0a0a0;
}

/* Status bar */
.status {
  flex: none;
  display: flex;
  align-items: center;
  height: 36px;
  padding-left: 7px;
  background: #f3f3f3;
  color: #666;
  font-size: 19px;
}

.access {
  gap: 1px;
  margin-left: 36px;
}

.views {
  display: flex;
  align-self: stretch;
  margin-left: auto;
}

.view {
  width: 75px;
}

.view.on {
  background: #c6c6c6;
}

.zoom-btn {
  width: 28px;
}

.zoom {
  width: 188px;
  height: 26px;
  margin: 0 2px;
  appearance: none;
  background: linear-gradient(#8a8a8a, #8a8a8a) center / 100% 2px no-repeat;
}

.zoom::-webkit-slider-thumb {
  appearance: none;
  width: 9px;
  height: 22px;
  background: #555;
}

.zoom-value {
  width: 51px;
  margin-left: 18px;
}
```
